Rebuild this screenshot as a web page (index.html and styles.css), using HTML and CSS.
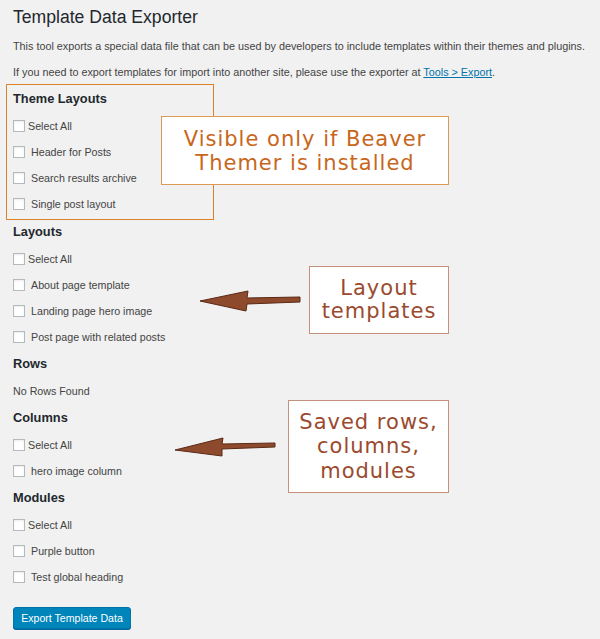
FILE: index.html
```html
<!DOCTYPE html>
<html>
<head>
<meta charset="utf-8">
<link rel="stylesheet" href="styles.css">
</head>
<body>
<div class="wrap">
  <h1 class="title">Template Data Exporter</h1>
  <p class="intro">This tool exports a special data file that can be used by developers to include templates within their themes and plugins.</p>
  <p class="intro intro-2">If you need to export templates for import into another site, please use the exporter at <a href="#" class="link">Tools &gt; Export</a>.</p>

  <div class="theme-box">
    <h2 class="sec-title">Theme Layouts</h2>
    <label class="item"><span class="cb"></span><span class="lbl">Select All</span></label>
    <label class="item"><span class="cb"></span><span class="lbl lbl-sp">Header for Posts</span></label>
    <label class="item"><span class="cb"></span><span class="lbl lbl-sp">Search results archive</span></label>
    <label class="item"><span class="cb"></span><span class="lbl lbl-sp">Single post layout</span></label>
  </div>

  <h2 class="sec-title">Layouts</h2>
  <label class="item"><span class="cb"></span><span class="lbl">Select All</span></label>
  <label class="item"><span class="cb"></span><span class="lbl lbl-sp">About page template</span></label>
  <label class="item"><span class="cb"></span><span class="lbl lbl-sp">Landing page hero image</span></label>
  <label class="item"><span class="cb"></span><span class="lbl lbl-sp">Post page with related posts</span></label>

  <h2 class="sec-title">Rows</h2>
  <div class="item"><span class="lbl">No Rows Found</span></div>

  <h2 class="sec-title">Columns</h2>
  <label class="item"><span class="cb"></span><span class="lbl">Select All</span></label>
  <label class="item"><span class="cb"></span><span class="lbl lbl-sp">hero image column</span></label>

  <h2 class="sec-title">Modules</h2>
  <label class="item"><span class="cb"></span><span class="lbl">Select All</span></label>
  <label class="item"><span class="cb"></span><span class="lbl lbl-sp">Purple button</span></label>
  <label class="item"><span class="cb"></span><span class="lbl lbl-sp">Test global heading</span></label>

  <div class="actions"><button class="btn">Export Template Data</button></div>
</div>

<div class="callout callout-1">Visible only if Beaver<br>Themer is installed</div>
<div class="callout callout-2">Layout<br>templates</div>
<div class="callout callout-3">Saved rows,<br>columns,<br>modules</div>

<svg class="arrow arrow-1" width="110" height="24" viewBox="0 0 110 24">
  <path d="M0 12 L48 2 L47 9 L100 8 L100 13 L47 15 L46 22 Z" fill="#8e4a2c" stroke="#5a2a16" stroke-width="1" stroke-linejoin="round"/>
</svg>
<svg class="arrow arrow-2" width="110" height="24" viewBox="0 0 110 24">
  <path d="M0 15 L48 3 L47 9 L100 8 L100 12 L47 14 L47 21 Z" fill="#8e4a2c" stroke="#5a2a16" stroke-width="1" stroke-linejoin="round"/>
</svg>
</body>
</html>
```

FILE: styles.css
```css
html, body {
  margin: 0;
  padding: 0;
}
body {
  background: #f1f1f1;
  font-family: "Liberation Sans", Arial, sans-serif;
  color: #444;
  width: 600px;
  height: 639px;
  overflow: hidden;
  position: relative;
}
.wrap {
  padding: 0 13px;
}
.title {
  margin: 5px 0 0;
  font-size: 17.6px;
  line-height: 24px;
  font-weight: normal;
  color: #23282d;
}
.intro {
  margin: 9px 0 0;
  font-size: 10.8px;
  line-height: 16px;
  color: #444;
}
.intro-2 {
  margin-top: 10px;
}
.link {
  color: #0073aa;
  text-decoration: underline;
}
.theme-box {
  margin: 4px 0 -2px -7px;
  width: 200px;
  border: 1px solid #d9822b;
  padding: 0 0 2px 6px;
}
.sec-title {
  margin: 0;
  width: max-content;
  height: 28px;
  line-height: 28px;
  font-size: 12.8px;
  font-weight: bold;
  color: #23282d;
}
.item {
  display: flex;
  width: max-content;
  align-items: center;
  height: 26px;
  font-size: 10.7px;
  color: #444;
}
.cb {
  width: 10px;
  height: 10px;
  border: 1px solid #b4b9be;
  background: #fff;
  box-shadow: inset 0 1px 2px rgba(0,0,0,0.08);
  margin-right: 3px;
  flex: none;
}
.lbl-sp {
  margin-left: 3px;
}
.actions {
  margin-top: 17px;
}
.btn {
  font-family: "Liberation Sans", Arial, sans-serif;
  font-size: 10.6px;
  color: #fff;
  background: #0085ba;
  border: 1px solid #0073aa;
  border-radius: 3px;
  height: 22px;
  width: 118px;
  padding: 0;
  box-shadow: 0 1px 0 #006799;
}
.callout {
  position: absolute;
  background: #fff;
  font-family: "DejaVu Sans", "Liberation Sans", sans-serif;
  font-size: 21px;
  letter-spacing: 1px;
  text-align: center;
  box-sizing: border-box;
  display: flex;
  align-items: center;
  justify-content: center;
}
.callout-1 {
  left: 161px;
  top: 116px;
  width: 288px;
  height: 69px;
  border: 1px solid #dd9a55;
  color: #c8661b;
  line-height: 24px;
}
.callout-2 {
  left: 309px;
  top: 266px;
  width: 140px;
  height: 68px;
  border: 1px solid #c4917f;
  color: #9a4a2e;
  line-height: 23px;
}
.callout-3 {
  left: 288px;
  top: 400px;
  width: 161px;
  height: 93px;
  border: 1px solid #c4917f;
  color: #9a4a2e;
  line-height: 24.5px;
}
.arrow {
  position: absolute;
}
.arrow-1 {
  left: 200px;
  top: 289px;
}
.arrow-2 {
  left: 175px;
  top: 435px;
}
```
